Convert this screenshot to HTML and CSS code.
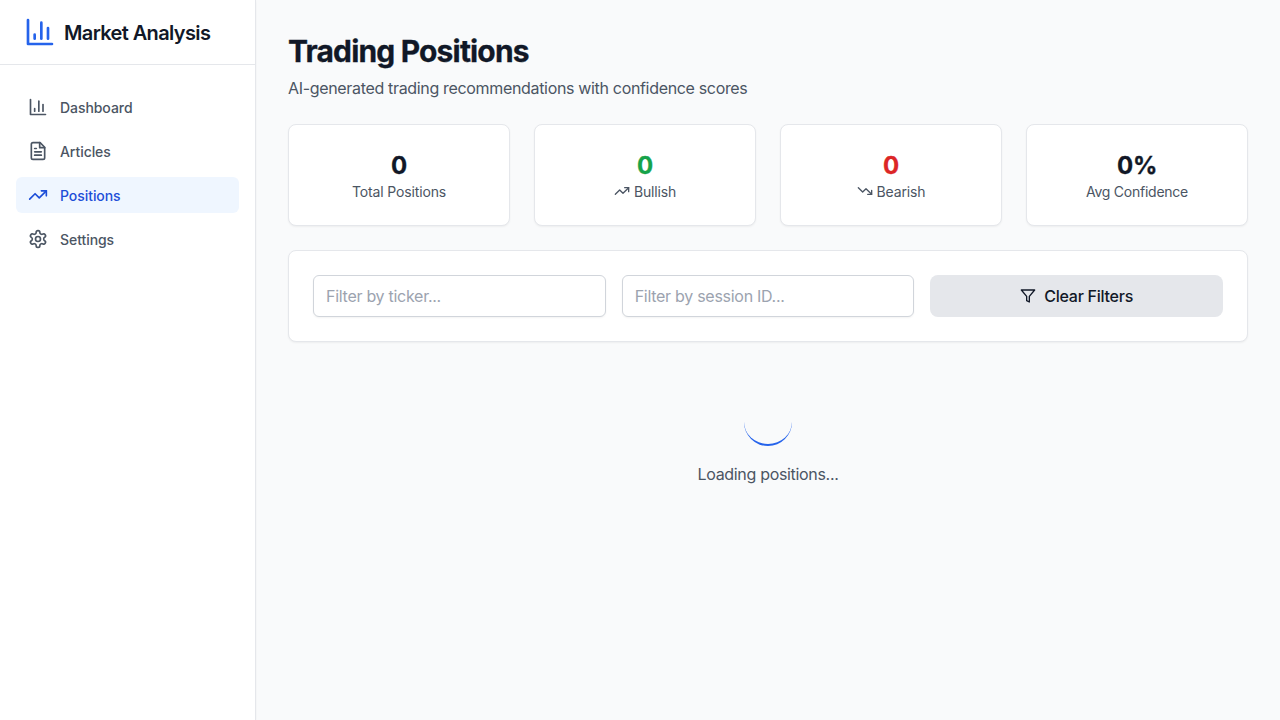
FILE: index.html
```html
<!DOCTYPE html>
<html lang="en">
<head>
<meta charset="utf-8">
<title>Market Analysis</title>
<link rel="stylesheet" href="styles.css">
</head>
<body>
<div class="app">
  <aside class="sidebar">
    <div class="brand">
      <svg class="icon brand-icon" viewBox="0 0 24 24"><path d="M3 3v18h18"/><path d="M13 17V5"/><path d="M18 17V9"/><path d="M8 17v-3"/></svg>
      <span class="brand-name">Market Analysis</span>
    </div>
    <nav class="nav">
      <a class="nav-item"><svg class="icon" viewBox="0 0 24 24"><path d="M3 3v18h18"/><path d="M13 17V5"/><path d="M18 17V9"/><path d="M8 17v-3"/></svg><span class="nav-text">Dashboard</span></a>
      <a class="nav-item"><svg class="icon" viewBox="0 0 24 24"><path d="M14.5 2H6a2 2 0 0 0-2 2v16a2 2 0 0 0 2 2h12a2 2 0 0 0 2-2V7.5L14.5 2z"/><path d="M14 2v6h6"/><path d="M16 13H8"/><path d="M16 17H8"/><path d="M10 9H8"/></svg><span class="nav-text">Articles</span></a>
      <a class="nav-item active"><svg class="icon" viewBox="0 0 24 24"><path d="M22 7l-8.5 8.5-5-5L2 17"/><path d="M16 7h6v6"/></svg><span class="nav-text">Positions</span></a>
      <a class="nav-item"><svg class="icon" viewBox="0 0 24 24"><path d="M12.22 2h-.44a2 2 0 0 0-2 2v.18a2 2 0 0 1-1 1.73l-.43.25a2 2 0 0 1-2 0l-.15-.08a2 2 0 0 0-2.73.73l-.22.38a2 2 0 0 0 .73 2.73l.15.1a2 2 0 0 1 1 1.72v.51a2 2 0 0 1-1 1.74l-.15.09a2 2 0 0 0-.73 2.73l.22.38a2 2 0 0 0 2.73.73l.15-.08a2 2 0 0 1 2 0l.43.25a2 2 0 0 1 1 1.73V20a2 2 0 0 0 2 2h.44a2 2 0 0 0 2-2v-.18a2 2 0 0 1 1-1.73l.43-.25a2 2 0 0 1 2 0l.15.08a2 2 0 0 0 2.73-.73l.22-.39a2 2 0 0 0-.73-2.73l-.15-.08a2 2 0 0 1-1-1.74v-.5a2 2 0 0 1 1-1.74l.15-.09a2 2 0 0 0 .73-2.73l-.22-.38a2 2 0 0 0-2.73-.73l-.15.08a2 2 0 0 1-2 0l-.43-.25a2 2 0 0 1-1-1.73V4a2 2 0 0 0-2-2z"/><circle cx="12" cy="12" r="3"/></svg><span class="nav-text">Settings</span></a>
    </nav>
  </aside>
  <main class="main">
    <header>
      <h1 class="title">Trading Positions</h1>
      <p class="subtitle">AI-generated trading recommendations with confidence scores</p>
    </header>
    <section class="stats">
      <div class="card stat"><div class="value">0</div><div class="label">Total Positions</div></div>
      <div class="card stat"><div class="value green">0</div><div class="label"><svg class="icon" viewBox="0 0 24 24"><path d="M22 7l-8.5 8.5-5-5L2 17"/><path d="M16 7h6v6"/></svg>Bullish</div></div>
      <div class="card stat"><div class="value red">0</div><div class="label"><svg class="icon" viewBox="0 0 24 24"><path d="M22 17l-8.5-8.5-5 5L2 7"/><path d="M16 17h6v-6"/></svg>Bearish</div></div>
      <div class="card stat"><div class="value">0%</div><div class="label wide">Avg Confidence</div></div>
    </section>
    <section class="card filters">
      <input class="field" type="text" placeholder="Filter by ticker...">
      <input class="field" type="text" placeholder="Filter by session ID...">
      <button class="clear"><svg class="icon" viewBox="0 0 24 24"><path d="M22 3H2l8 9.46V19l4 2v-8.54L22 3z"/></svg>Clear Filters</button>
    </section>
    <section class="loading">
      <div class="spinner"></div>
      <p class="loading-text">Loading positions...</p>
    </section>
  </main>
</div>
</body>
</html>
```
FILE: styles.css
```css
* { box-sizing: border-box; margin: 0; padding: 0; }
body { font-family: Inter, sans-serif; font-size: 16px; line-height: 24px; color: #111827; background: #f9fafb; }
.app { display: flex; min-height: 100vh; }
.icon { width: 20px; height: 20px; flex: none; fill: none; stroke: currentColor; stroke-width: 2; stroke-linecap: round; stroke-linejoin: round; }
.sidebar { width: 256px; flex: none; background: #fff; border-right: 1px solid #e5e7eb; box-shadow: 0 1px 2px rgba(0,0,0,.05); }
.brand { display: flex; align-items: center; gap: 8px; height: 65px; padding: 0 24px; border-bottom: 1px solid #e5e7eb; font-size: 20px; line-height: 28px; font-weight: 600; letter-spacing: -0.63px; }
.brand-icon { width: 32px; height: 32px; color: #2563eb; }
.brand-name, .nav-text { padding-top: 2px; }
.nav { display: flex; flex-direction: column; gap: 8px; padding: 24px 16px; }
.nav-item { display: flex; align-items: center; gap: 12px; height: 36px; padding: 0 12px; border-radius: 6px; color: #4b5563; font-size: 14px; line-height: 20px; font-weight: 500; letter-spacing: -0.06px; }
.nav-item.active { background: #eff6ff; color: #1d4ed8; }
.main { flex: 1; display: flex; flex-direction: column; gap: 24px; padding: 32px; }
.title { font-size: 30px; line-height: 38px; font-weight: 700; letter-spacing: -0.83px; -webkit-text-stroke: 0.3px currentColor; }
.subtitle { margin-top: 6px; color: #4b5563; letter-spacing: -0.33px; }
.card { background: #fff; border: 1px solid #e5e7eb; border-radius: 8px; box-shadow: 0 1px 2px rgba(0,0,0,.05); }
.stats { display: grid; grid-template-columns: repeat(4, 1fr); gap: 24px; }
.stat { padding: 24px; text-align: center; }
.value { font-size: 24px; line-height: 34px; font-weight: 700; letter-spacing: -0.3px; -webkit-text-stroke: 0.3px currentColor; }
.green { color: #16a34a; }
.red { color: #dc2626; }
.label { display: flex; align-items: center; justify-content: center; gap: 4px; height: 18px; color: #4b5563; font-size: 14px; line-height: 18px; letter-spacing: -0.15px; }
.label.wide { letter-spacing: -0.24px; }
.label .icon, .clear .icon { width: 16px; height: 16px; }
.label .icon { margin-bottom: 2px; }
.filters { display: grid; grid-template-columns: repeat(3, 1fr); gap: 16px; padding: 24px; }
.field { width: 100%; height: 42px; padding: 8px 12px; border: 1px solid #d1d5db; border-radius: 6px; background: #fff; box-shadow: 0 1px 2px rgba(0,0,0,.05); font: inherit; letter-spacing: -0.28px; color: #111827; }
.field::placeholder { color: #9ca3af; }
.clear { display: flex; align-items: center; justify-content: center; gap: 8px; border: 0; border-radius: 8px; background: #e5e7eb; font: inherit; font-weight: 500; letter-spacing: -0.25px; color: #111827; }
.loading { padding: 32px 0; text-align: center; }
.spinner { width: 48px; height: 48px; margin: 0 auto; border-radius: 50%; border-bottom: 2px solid #2563eb; }
.loading-text { margin-top: 16px; color: #4b5563; letter-spacing: -0.32px; }
```
